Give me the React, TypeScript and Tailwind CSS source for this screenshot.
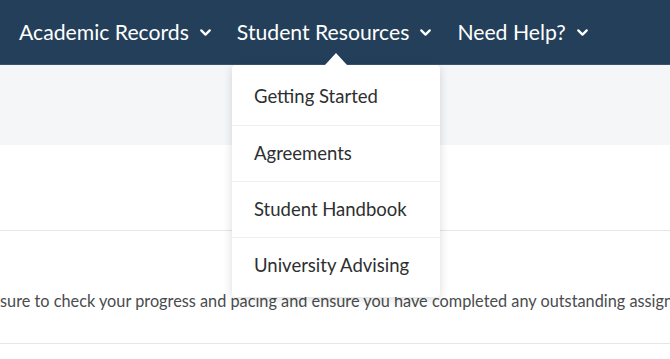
import { ChevronDown } from 'lucide-react'

const navItems = ['Academic Records', 'Student Resources', 'Need Help?']
const menuItems = ['Getting Started', 'Agreements', 'Student Handbook', 'University Advising']

export default function App() {
  return (
    <div className="relative h-[359px] w-[670px] overflow-hidden bg-white font-['Lato','Noto_Sans',sans-serif]">
      <nav className="flex h-[65px] items-center gap-[23px] border-b border-[#3a5470] bg-[#243f5a] pl-[19px] pt-[1px]">
        {navItems.map((item) => (
          <div key={item} className="flex items-center gap-[8px] text-[21.2px] text-white">
            <span>{item}</span>
            <ChevronDown size={17} strokeWidth={3.2} />
          </div>
        ))}
      </nav>

      <div className="h-[80px] bg-[#f5f6f8]" />
      <div className="h-[86px] border-b border-[#e3e6ea]" />
      <div className="flex h-[113px] items-end border-b border-[#e3e6ea] pb-[30px]">
        <p className="whitespace-nowrap text-[16.3px] text-[#494c4e]">
          sure to check your progress and pacing and ensure you have completed any outstanding assignments
        </p>
      </div>

      <div className="absolute left-[232px] top-[65px] w-[208px] rounded-[4px] bg-white py-[4px] shadow-[0_2px_10px_rgba(0,0,0,0.15)]">
        <div className="absolute -top-[12px] left-[93px] h-0 w-0 border-x-[11px] border-b-[12px] border-x-transparent border-b-white" />
        {menuItems.map((item, i) => (
          <div
            key={item}
            className={`flex h-[56px] items-center px-[22px] text-[18.5px] text-[#2d2f31] ${i > 0 ? 'border-t border-[#eef0f2]' : ''}`}
          >
            {item}
          </div>
        ))}
      </div>
    </div>
  )
}
